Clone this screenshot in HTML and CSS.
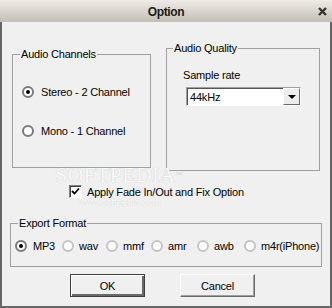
FILE: index.html
```html
<!DOCTYPE html>
<html lang="en">
<head>
    <meta charset="UTF-8">
    <title>Option</title>
    <link rel="stylesheet" href="styles.css">
</head>
<body>
    <div class="window">
        <div class="titlebar">
            <span class="title">Option</span>
            <svg class="close" width="9" height="9" viewBox="0 0 9 9">
                <path d="M1 1 L8 8 M8 1 L1 8" stroke="#333" stroke-width="2.4" fill="none"/>
            </svg>
        </div>
        <div class="content">
            <div class="top-row">
                <fieldset class="group channels">
                    <legend>Audio Channels</legend>
                    <label class="option first"><span class="radio checked"></span>Stereo - 2 Channel</label>
                    <label class="option second"><span class="radio"></span>Mono - 1 Channel</label>
                </fieldset>
                <fieldset class="group quality">
                    <legend>Audio Quality</legend>
                    <div class="field-label">Sample rate</div>
                    <div class="combo">
                        <span class="combo-value">44kHz</span>
                        <span class="combo-btn"><span class="arrow"></span></span>
                    </div>
                </fieldset>
            </div>

            <label class="check-row"><span class="checkbox">
                <svg width="9" height="9" viewBox="0 0 9 9"><path d="M1 4 L3.5 6.5 L8 1.5" stroke="#000" stroke-width="1.8" fill="none"/></svg>
            </span>Apply Fade In/Out and Fix Option</label>

            <fieldset class="group export">
                <legend>Export Format</legend>
                <div class="formats">
                    <label class="option"><span class="radio checked"></span>MP3</label>
                    <label class="option"><span class="radio light"></span>wav</label>
                    <label class="option"><span class="radio light"></span>mmf</label>
                    <label class="option"><span class="radio light"></span>amr</label>
                    <label class="option"><span class="radio light"></span>awb</label>
                    <label class="option"><span class="radio light"></span>m4r(iPhone)</label>
                </div>
            </fieldset>

            <div class="buttons">
                <button class="btn default">OK</button>
                <button class="btn">Cancel</button>
            </div>

            <div class="watermark">
                <div class="wm-big">SOFTPEDIA<span class="wm-tm">™</span></div>
                <div class="wm-small">www.softpedia.com</div>
            </div>
        </div>
    </div>
</body>
</html>
```

FILE: styles.css
```css
/* Base */
* {
    box-sizing: border-box;
    margin: 0;
    padding: 0;
}
body {
    font-family: "Liberation Sans", Arial, sans-serif;
    font-size: 11px;
    letter-spacing: -0.2px;
    color: #000;
    background: #f0f0f0;
}
/* Window frame */
.window {
    width: 332px;
    height: 308px;
    display: flex;
    flex-direction: column;
}
.titlebar {
    height: 22px;
    background: linear-gradient(#efece7, #c3beb6);
    display: flex;
    align-items: center;
    justify-content: center;
    position: relative;
}
.title {
    font-weight: bold;
    font-size: 12px;
    letter-spacing: -0.4px;
    color: #1a1a1a;
    margin-top: 1px;
}
.close {
    position: absolute;
    right: 5px;
    top: 7px;
}
.content {
    flex: 1;
    background: #f0f0f0;
    border: 2px solid #666;
    border-top: none;
    padding-top: 19px;
    position: relative;
}
/* Group boxes */
.group {
    border: 1px solid #a0a0a0;
    min-width: 0;
}
.group legend {
    padding: 0 1px;
    margin-left: 7px;
    line-height: 14px;
}
.top-row {
    display: flex;
    align-items: flex-start;
    padding: 0 10px;
    gap: 15px;
}
.channels {
    width: 139px;
    margin-top: 6px;
    padding-bottom: 29px;
}
.channels .option {
    margin-left: 9px;
}
.quality {
    width: 154px;
    padding-bottom: 64px;
}
.quality legend {
    margin-left: 6px;
}
/* Radio options */
.option {
    display: flex;
    align-items: center;
    height: 14px;
    line-height: 14px;
    white-space: nowrap;
}
.channels .first {
    margin-top: 24px;
}
.channels .second {
    margin-top: 25px;
}
.radio {
    width: 12px;
    height: 12px;
    border-radius: 50%;
    border: 2px solid #7a7a7a;
    background: #fff;
    margin-right: 7px;
    flex-shrink: 0;
    display: flex;
    align-items: center;
    justify-content: center;
}
.radio.light {
    border-color: #c4c4c4;
    margin-right: 5px;
}
.radio.checked::after {
    content: "";
    width: 4px;
    height: 4px;
    border-radius: 50%;
    background: #000;
}
/* Sample rate combo */
.field-label {
    margin: 13px 0 0 16px;
    line-height: 14px;
}
.combo {
    margin: 5px 0 0 19px;
    width: 115px;
    height: 19px;
    background: #fff;
    border: 1px solid;
    border-color: #a0a0a0 #fff #fff #a0a0a0;
    box-shadow: inset 1px 1px 0 #555;
    display: flex;
    align-items: center;
    justify-content: space-between;
}
.combo-value {
    padding-left: 3px;
}
.combo-btn {
    width: 17px;
    height: 17px;
    background: #ececec;
    border: 1px solid;
    border-color: #fff #696969 #696969 #fff;
    display: flex;
    align-items: center;
    justify-content: center;
}
.arrow {
    border-left: 4px solid transparent;
    border-right: 4px solid transparent;
    border-top: 4px solid #000;
    margin-top: 1px;
}
/* Checkbox */
.check-row {
    display: flex;
    align-items: center;
    margin: 14px 0 0 67px;
    height: 13px;
    white-space: nowrap;
}
.checkbox {
    width: 13px;
    height: 13px;
    background: #fff;
    border: 1px solid;
    border-color: #808080 #fff #fff #808080;
    box-shadow: inset 1px 1px 0 #404040;
    margin-right: 5px;
    display: flex;
    align-items: center;
    justify-content: center;
}
/* Export format */
.export {
    margin: 18px 8px 0 8px;
    padding: 9px 0 13px 0;
}
.formats {
    display: grid;
    grid-template-columns: 47px 44px 45px 46px 47px auto;
    padding-left: 4px;
}
.formats .option .radio.checked {
    margin-right: 6px;
}
/* Buttons */
.buttons {
    display: flex;
    gap: 35px;
    margin: 7px 0 0 68px;
}
.btn {
    width: 75px;
    height: 23px;
    font-family: inherit;
    font-size: 11px;
    letter-spacing: -0.2px;
    background: #f0f0f0;
    border: 1px solid;
    border-color: #fff #696969 #696969 #fff;
    box-shadow: inset -1px -1px 0 #a0a0a0;
}
.btn.default {
    border: 1px solid #404040;
    box-shadow: inset 1px 1px 0 #fff, inset -2px -2px 0 #696969;
}
/* Watermark over the dialog */
.watermark {
    position: absolute;
    left: 53px;
    top: 142px;
    pointer-events: none;
    color: #f8f8f8;
}
.wm-big {
    font-family: "Liberation Serif", serif;
    font-size: 22px;
    line-height: 22px;
    letter-spacing: 0.2px;
    text-shadow: 0 0 1px #bdbdbd;
}
.wm-tm {
    font-family: "Liberation Sans", sans-serif;
    font-size: 7px;
    color: #d4d4d4;
    vertical-align: top;
    text-shadow: none;
}
.wm-small {
    margin: 11px 0 0 23px;
    font-size: 10px;
    line-height: 12px;
    color: #fafafa;
    text-shadow: 0 0 1px #c4c4c4;
}
```
